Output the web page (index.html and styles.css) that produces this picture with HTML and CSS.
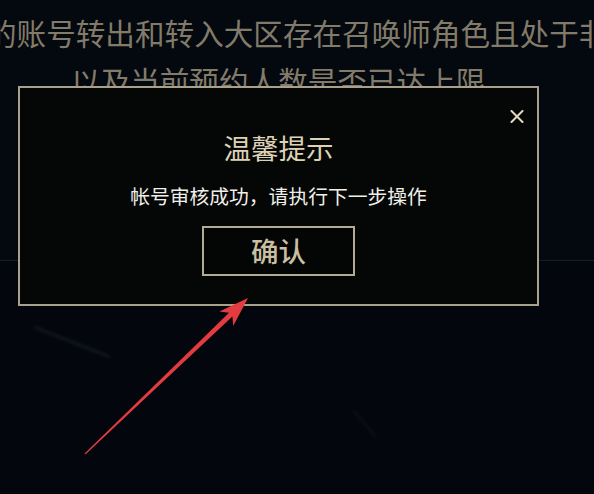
FILE: index.html
```html
<!DOCTYPE html>
<html lang="zh-CN">
<head>
<meta charset="utf-8">
<title>温馨提示</title>
<link rel="stylesheet" href="styles.css">
</head>
<body>
<div class="page">
  <section class="hero">
    <p class="line line-first">的账号转出和转入大区存在召唤师角色且处于非正常状态</p>
    <p class="line">以及当前预约人数是否已达上限</p>
  </section>
  <section class="lower"></section>

  <div class="modal">
    <button class="close" aria-label="关闭">
      <svg width="14" height="13" viewBox="0 0 14 13"><path d="M1.5 1 L12.5 12 M12.5 1 L1.5 12" stroke="#e6dabd" stroke-width="2" stroke-linecap="round"/></svg>
    </button>
    <h2 class="title">温馨提示</h2>
    <p class="message">帐号审核成功，请执行下一步操作</p>
    <button class="confirm">确认</button>
  </div>

  <svg class="overlay" width="594" height="494" viewBox="0 0 594 494">
    <defs>
      <filter id="soft" x="-20%" y="-20%" width="140%" height="140%"><feGaussianBlur stdDeviation="1.5"/></filter>
    </defs>
    <line x1="34" y1="327" x2="110" y2="357" stroke="rgba(200,210,230,0.07)" stroke-width="3" filter="url(#soft)"/>
    <line x1="353" y1="410" x2="376" y2="437" stroke="rgba(200,210,230,0.05)" stroke-width="2" filter="url(#soft)"/>
    <polygon fill="#e33b40" points="84.6,453.5 229,312.8 219.4,311.5 248,298 233.2,325.9 232.4,316.4 85.4,454.5"/>
  </svg>
</div>
</body>
</html>
```

FILE: styles.css
```css
html, body {
  margin: 0;
  padding: 0;
  background: #04070e;
  overflow: hidden;
}

.page {
  position: relative;
  width: 594px;
  height: 494px;
  overflow: hidden;
  font-family: "Noto Sans CJK SC", "Noto Sans", sans-serif;
}

.hero {
  height: 251px;
  padding-top: 9px;
  border-bottom: 1px solid #161b24;
  background: #04080f;
}

.line {
  margin: 0;
  font-size: 29.6px;
  line-height: 48px;
  color: #837b69;
  white-space: nowrap;
}

.line-first {
  margin-left: -13px;
}

.line:not(.line-first) {
  margin-left: 71px;
}

.lower {
  height: 233px;
  background: #03060d;
}

.modal {
  position: absolute;
  left: 18px;
  top: 86px;
  width: 517px;
  height: 216px;
  border: 2px solid #a9a18b;
  background: #040706;
  display: flex;
  flex-direction: column;
  align-items: center;
  box-sizing: content-box;
}

.close {
  position: absolute;
  right: 13px;
  top: 22px;
  width: 14px;
  height: 13px;
  padding: 0;
  border: 0;
  background: none;
  display: flex;
}

.title {
  margin: 45px 0 0;
  font-size: 27.5px;
  line-height: 28px;
  font-weight: normal;
  color: #dfd2b4;
}

.message {
  margin: 25px 0 0;
  font-size: 19.8px;
  line-height: 20px;
  color: #f1efea;
}

.confirm {
  margin-top: 20px;
  width: 153px;
  height: 50px;
  box-sizing: border-box;
  border: 2px solid #b4ab94;
  background: #040605;
  color: #cbbfa2;
  font-family: "Noto Sans CJK SC", "Noto Sans", sans-serif;
  font-size: 27.5px;
  font-weight: 500;
  line-height: 1;
  padding: 0;
}

.overlay {
  position: absolute;
  left: 0;
  top: 0;
  pointer-events: none;
}
```
